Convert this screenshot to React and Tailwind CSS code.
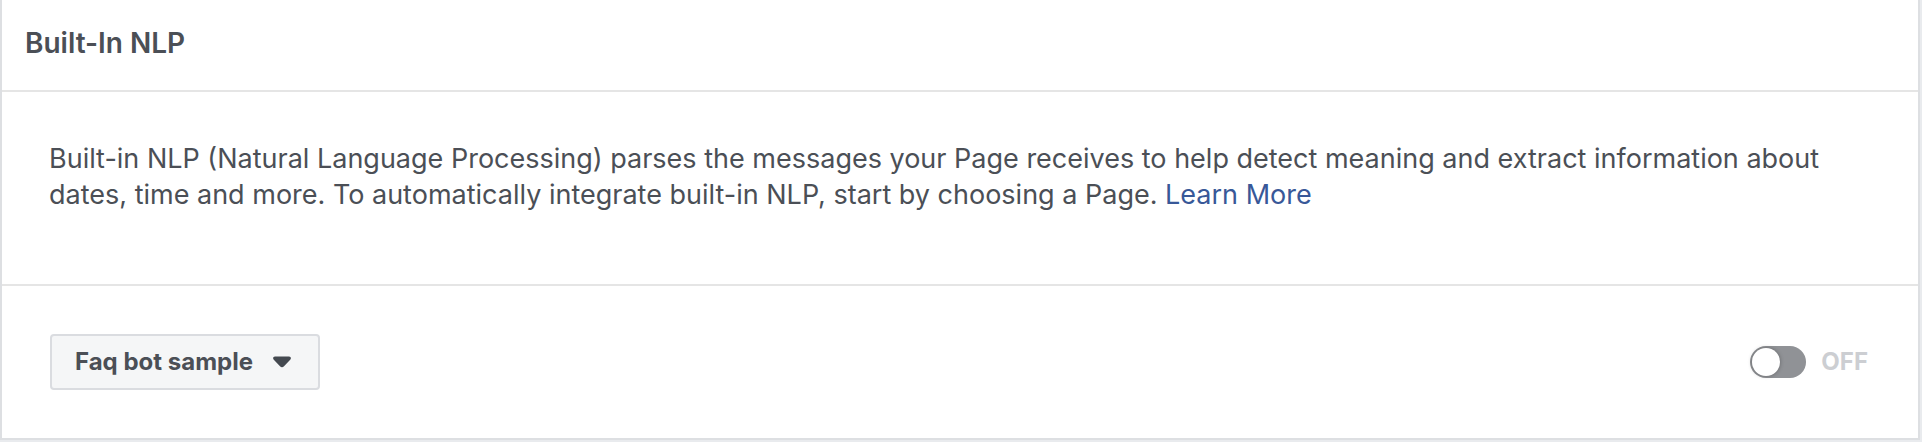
import { useState } from "react";

function PageSelect() {
  return (
    <div className="relative">
      <select
        aria-label="Page"
        className="h-14 w-[270px] cursor-pointer appearance-none rounded-sm border-2 border-[#dadce0] bg-[#f5f6f7] pl-[23px] pr-12 text-2xl font-bold text-[#4b4f56]"
      >
        <option>Faq bot sample</option>
      </select>
      <svg
        aria-hidden="true"
        viewBox="0 0 18 12"
        className="pointer-events-none absolute right-[29px] top-[22px] h-3 w-[18px] fill-[#444950]"
      >
        <path d="M2 0.5H16C17.8 0.5 18.5 2.4 17.2 3.8L11 10.3C9.8 11.7 8.2 11.7 7 10.3L0.8 3.8C-0.5 2.4 0.2 0.5 2 0.5Z" />
      </svg>
    </div>
  );
}

function Toggle() {
  const [on, setOn] = useState(false);
  return (
    <label className="flex cursor-pointer items-center gap-[15px]">
      <input
        type="checkbox"
        role="switch"
        checked={on}
        onChange={() => setOn(!on)}
        className="peer sr-only"
      />
      <span className="flex h-8 w-14 rounded-full bg-[#909296] p-[2px] peer-checked:justify-end peer-checked:bg-[#4080ff]">
        <span className="size-7 rounded-full bg-white shadow-[0_0_4px_rgba(0,0,0,0.3)]" />
      </span>
      <span className="text-2xl leading-8 font-bold text-[#ccced2]">{on ? "ON" : "OFF"}</span>
    </label>
  );
}

export default function App() {
  return (
    <main className="bg-[#e9ebee] pr-[2px] pb-[2px] font-['Inter',sans-serif] text-[#4b4f56]">
      <section className="border-2 border-t-0 border-[#dddfe2] bg-white">
        <header className="border-b-2 border-[#e5e5e5] px-[23px] pt-[25px] pb-[29px]">
          <h1 className="text-[28px] leading-9 font-semibold">Built-In NLP</h1>
        </header>
        <div className="border-b-2 border-[#e5e5e5] px-[47px] pt-[49px] pb-[71px]">
          <p className="text-[27px] leading-9">
            Built-in NLP (Natural Language Processing) parses the messages your Page receives to help detect meaning and
            extract information about dates, time and more. To automatically integrate built-in NLP, start by choosing a
            Page.{" "}
            <a href="#learn-more" className="text-[#385898]">
              Learn More
            </a>
          </p>
        </div>
        <footer className="flex items-center justify-between py-12 pr-[50px] pl-12">
          <PageSelect />
          <Toggle />
        </footer>
      </section>
    </main>
  );
}
